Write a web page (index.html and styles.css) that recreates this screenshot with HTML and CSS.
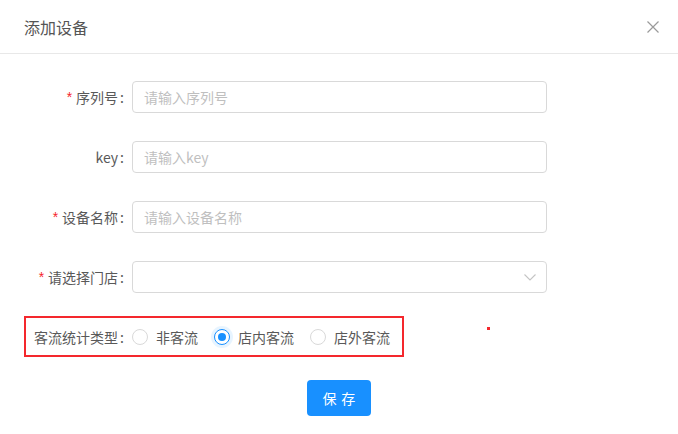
FILE: index.html
```html
<!DOCTYPE html>
<html lang="zh-CN">
<head>
<meta charset="utf-8">
<title>添加设备</title>
<link rel="stylesheet" href="styles.css">
</head>
<body>
<div class="modal">
  <div class="header">
    <span class="title">添加设备</span>
    <span class="close" aria-label="关闭">
      <svg width="12" height="12" viewBox="0 0 12 12"><path d="M0.5 0.5 L11.5 11.5 M11.5 0.5 L0.5 11.5" stroke="#9a9a9a" stroke-width="1.2" fill="none"/></svg>
    </span>
  </div>
  <form class="form">
    <div class="row">
      <label class="label req">序列号</label>
      <input class="input" placeholder="请输入序列号">
    </div>
    <div class="row">
      <label class="label">key</label>
      <input class="input" placeholder="请输入key">
    </div>
    <div class="row">
      <label class="label req">设备名称</label>
      <input class="input" placeholder="请输入设备名称">
    </div>
    <div class="row">
      <label class="label req">请选择门店</label>
      <div class="input select">
        <svg class="arrow" width="12" height="7" viewBox="0 0 12 7"><path d="M0.5 0.5 L6 6 L11.5 0.5" stroke="#c4c4c4" stroke-width="1.1" fill="none"/></svg>
      </div>
    </div>
    <div class="radio-box">
      <span class="radio-label">客流统计类型</span>
      <label class="radio-item"><span class="radio"></span><span class="radio-text">非客流</span></label>
      <label class="radio-item"><span class="radio checked"></span><span class="radio-text">店内客流</span></label>
      <label class="radio-item"><span class="radio"></span><span class="radio-text">店外客流</span></label>
    </div>
    <div class="actions">
      <button type="button" class="btn">保存</button>
    </div>
  </form>
  <span class="dot"></span>
</div>
</body>
</html>
```

FILE: styles.css
```css
* { box-sizing: border-box; }
html, body {
  margin: 0;
  padding: 0;
  background: #fff;
}
body {
  font-family: "Noto Sans CJK SC", "Noto Sans", sans-serif;
  font-size: 14px;
  color: #595959;
}
.modal {
  position: relative;
  width: 678px;
  height: 434px;
  background: #fff;
}
.header {
  height: 54px;
  border-bottom: 1px solid #e8e8e8;
  display: flex;
  align-items: center;
  justify-content: space-between;
  padding: 0 19px 0 24px;
}
.title {
  font-size: 16px;
  color: #555;
  line-height: 22px;
}
.close {
  display: flex;
  width: 12px;
  height: 12px;
}
.form {
  padding-top: 27px;
}
.row {
  display: flex;
  align-items: center;
  height: 32px;
}
.row + .row { margin-top: 28px; }
.label {
  width: 132px;
  flex-shrink: 0;
  display: flex;
  justify-content: flex-end;
  align-items: center;
  color: #595959;
  line-height: 20px;
  white-space: nowrap;
}
.label::after {
  content: ":";
  margin: 0 8px 0 2px;
}
.label.req::before {
  content: "*";
  color: #f5222d;
  margin-right: 4px;
  font-family: "Liberation Sans", sans-serif;
  font-size: 14px;
}
.input {
  width: 415px;
  height: 32px;
  border: 1px solid #d9d9d9;
  border-radius: 4px;
  padding: 4px 11px;
  font-family: inherit;
  font-size: 14px;
  color: #595959;
  outline: none;
  background: #fff;
}
.input::placeholder { color: #bfbfbf; }
.select {
  display: flex;
  align-items: center;
  justify-content: flex-end;
  padding-right: 10px;
}
.radio-box {
  margin: 23px 0 0 24px;
  width: 380px;
  height: 41px;
  border: 2px solid #f4282d;
  display: flex;
  align-items: center;
  padding-left: 8px;
  white-space: nowrap;
}
.radio-label {
  display: flex;
  align-items: center;
  flex-shrink: 0;
}
.radio-label::after {
  content: ":";
  margin: 0 8px 0 2px;
}
.radio-item {
  display: flex;
  align-items: center;
  margin-right: 8px;
  flex-shrink: 0;
}
.radio-item:last-child { margin-right: 0; }
.radio {
  position: relative;
  flex-shrink: 0;
  width: 16px;
  height: 16px;
  border: 1px solid #d9d9d9;
  border-radius: 50%;
  background: #fff;
}
.radio.checked {
  border-color: #1890ff;
  box-shadow: 0 0 0 3px rgba(24, 144, 255, 0.1);
}
.radio.checked::after {
  content: "";
  position: absolute;
  left: 3px;
  top: 3px;
  width: 8px;
  height: 8px;
  border-radius: 50%;
  background: #1890ff;
}
.radio-text {
  padding: 0 8px;
  color: #595959;
}
.actions {
  margin-top: 23px;
  display: flex;
  justify-content: center;
}
.btn {
  width: 64px;
  height: 36px;
  border: none;
  border-radius: 4px;
  background: #1890ff;
  color: #fff;
  font-family: inherit;
  font-size: 14px;
  letter-spacing: 0.34em;
  text-indent: 0.34em;
  padding: 0;
  cursor: pointer;
}
.dot {
  position: absolute;
  left: 487px;
  top: 327px;
  width: 3px;
  height: 3px;
  background: #f4282d;
}
```
